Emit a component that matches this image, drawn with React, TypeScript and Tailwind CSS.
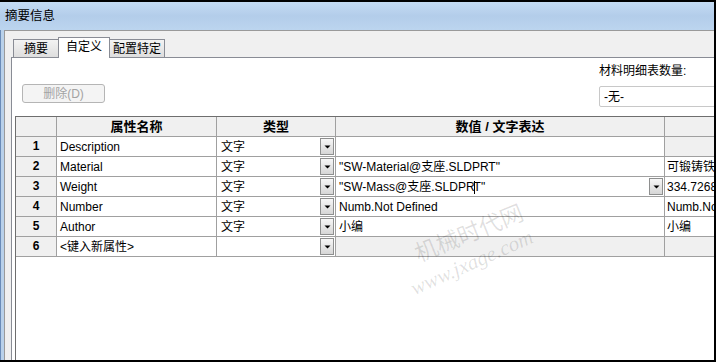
import React from "react";

const FONT = '"Liberation Sans", "Noto Sans CJK SC", sans-serif';

function DD() {
  return (
    <div className="w-[14px] h-[17px] shrink-0 border border-[#8e8f8f] bg-linear-to-b from-[#f7f7f7] to-[#d6d6d6] flex items-center justify-center">
      <svg width="7" height="4" viewBox="0 0 7 4">
        <path d="M0.5 0.5H6.5L3.5 3.5Z" fill="#000" />
      </svg>
    </div>
  );
}

type Row = {
  n: number;
  name: string;
  type: string;
  value: React.ReactNode;
  valueDD?: boolean;
  last: string;
  gray?: boolean;
  lastGray?: boolean;
};

const rows: Row[] = [
  { n: 1, name: "Description", type: "文字", value: "", last: "", lastGray: true },
  { n: 2, name: "Material", type: "文字", value: '"SW-Material@支座.SLDPRT"', last: "可锻铸铁" },
  {
    n: 3,
    name: "Weight",
    type: "文字",
    value: (
      <span className="whitespace-nowrap">
        "SW-Mass@支座.SLDPR
        <span className="inline-block w-px h-[13px] bg-black align-middle -mx-[1px]" />
        T"
      </span>
    ),
    valueDD: true,
    last: "334.72686",
  },
  { n: 4, name: "Number", type: "文字", value: "Numb.Not Defined", last: "Numb.Not Defined" },
  { n: 5, name: "Author", type: "文字", value: "小编", last: "小编" },
  { n: 6, name: "<键入新属性>", type: "", value: "", last: "", gray: true, lastGray: true },
];

const cell = "h-[20px] border-r border-b border-[#a0a0a0] overflow-hidden whitespace-nowrap flex items-center";

export default function App() {
  return (
    <div
      className="relative w-[716px] h-[362px] overflow-hidden bg-[#f0f0f0] flex flex-col border-t-2 border-r-2 border-b-2 border-black text-[12px] text-black"
      style={{ fontFamily: FONT }}
    >
      {/* title bar */}
      <div className="h-[28px] shrink-0 flex items-center pl-[5px] bg-linear-to-b from-[#c4dbf3] via-[#b3cdea] to-[#bcd5ef] text-[12.5px]">
        摘要信息
      </div>
      <div className="flex-1 flex min-h-0">
        <div className="w-[4px] shrink-0 border-l border-[#6a8cb9] bg-[#b9d1ea]" />
        <div className="flex-1 min-w-0 flex flex-col border-l border-t border-[#9a9a9a] bg-[#f0f0f0] pl-[6px] pt-[6px]">
          {/* tabs */}
          <div className="h-[20px] shrink-0 flex items-end pl-[2px]">
            <div className="w-[46px] h-[18px] border border-b-0 border-[#898c95] bg-linear-to-b from-[#f3f3f3] to-[#dedede] flex items-center justify-center">
              摘要
            </div>
            <div className="relative z-10 w-[52px] h-[21px] -mb-px -ml-px border border-b-0 border-[#898c95] bg-white flex items-center justify-center pb-[2px]">
              自定义
            </div>
            <div className="w-[56px] h-[18px] -ml-px border border-b-0 border-[#898c95] bg-linear-to-b from-[#f3f3f3] to-[#dedede] flex items-center justify-center">
              配置特定
            </div>
          </div>
          {/* panel */}
          <div className="flex-1 min-h-0 flex flex-col border-l border-t border-[#898c95] bg-white pl-[3px]">
            <div className="flex shrink-0">
              <div className="pt-[26px] shrink-0">
                <div className="ml-[7px] w-[83px] h-[19px] border border-[#b5b5b5] rounded-[3px] bg-[#f4f4f4] text-[#a3a3a3] flex items-center justify-center">
                  删除(D)
                </div>
              </div>
              <div className="ml-[494px] pt-[5px] shrink-0">
                <div className="h-[16px] leading-[16px]">材料明细表数量:</div>
                <div className="mt-[7px] w-[130px] h-[21px] border border-[#c8c8c8] rounded-[2px] bg-white flex items-center pl-[4px]">
                  -无-
                </div>
              </div>
            </div>
            {/* grid */}
            <div className="mt-[9px] flex-1 border-l border-t border-[#6e6e6e] bg-white">
              <div className="grid grid-cols-[41px_160px_119px_329px_120px] w-max">
                <div className={`${cell} bg-[#f0f0f0]`} />
                <div className={`${cell} bg-[#f0f0f0] justify-center font-bold text-[13px]`}>属性名称</div>
                <div className={`${cell} bg-[#f0f0f0] justify-center font-bold text-[13px]`}>类型</div>
                <div className={`${cell} bg-[#f0f0f0] justify-center font-bold text-[13px]`}>数值 / 文字表达</div>
                <div className={`${cell} bg-[#f0f0f0]`} />
                {rows.map((r) => (
                  <React.Fragment key={r.n}>
                    <div className={`${cell} bg-[#f0f0f0] justify-center font-bold pb-[2px]`}>{r.n}</div>
                    <div className={`${cell} pl-[3px]`}>{r.name}</div>
                    <div className={`${cell} pl-[4px] pr-[1px] justify-between`}>
                      <span>{r.type}</span>
                      <DD />
                    </div>
                    <div className={`${cell} pl-[3px] pr-[1px] justify-between ${r.gray ? "bg-[#f0f0f0]" : ""}`}>
                      <span>{r.value}</span>
                      {r.valueDD ? <DD /> : null}
                    </div>
                    <div className={`${cell} pl-[2px] ${r.lastGray ? "bg-[#f0f0f0]" : ""}`}>{r.last}</div>
                  </React.Fragment>
                ))}
              </div>
            </div>
          </div>
        </div>
      </div>
      {/* watermark */}
      <div
        className="absolute left-[415px] top-[234px] text-[23px] text-[#000]/12 whitespace-nowrap pointer-events-none origin-left -rotate-[22deg]"
        style={{ fontFamily: '"Noto Sans CJK SC", sans-serif' }}
      >
        机械时代网
      </div>
      <div
        className="absolute left-[412px] top-[272px] text-[21px] italic text-[#000]/12 whitespace-nowrap pointer-events-none origin-left -rotate-[24deg]"
        style={{ fontFamily: '"Liberation Serif", serif' }}
      >
        www.jxage.com
      </div>
    </div>
  );
}
